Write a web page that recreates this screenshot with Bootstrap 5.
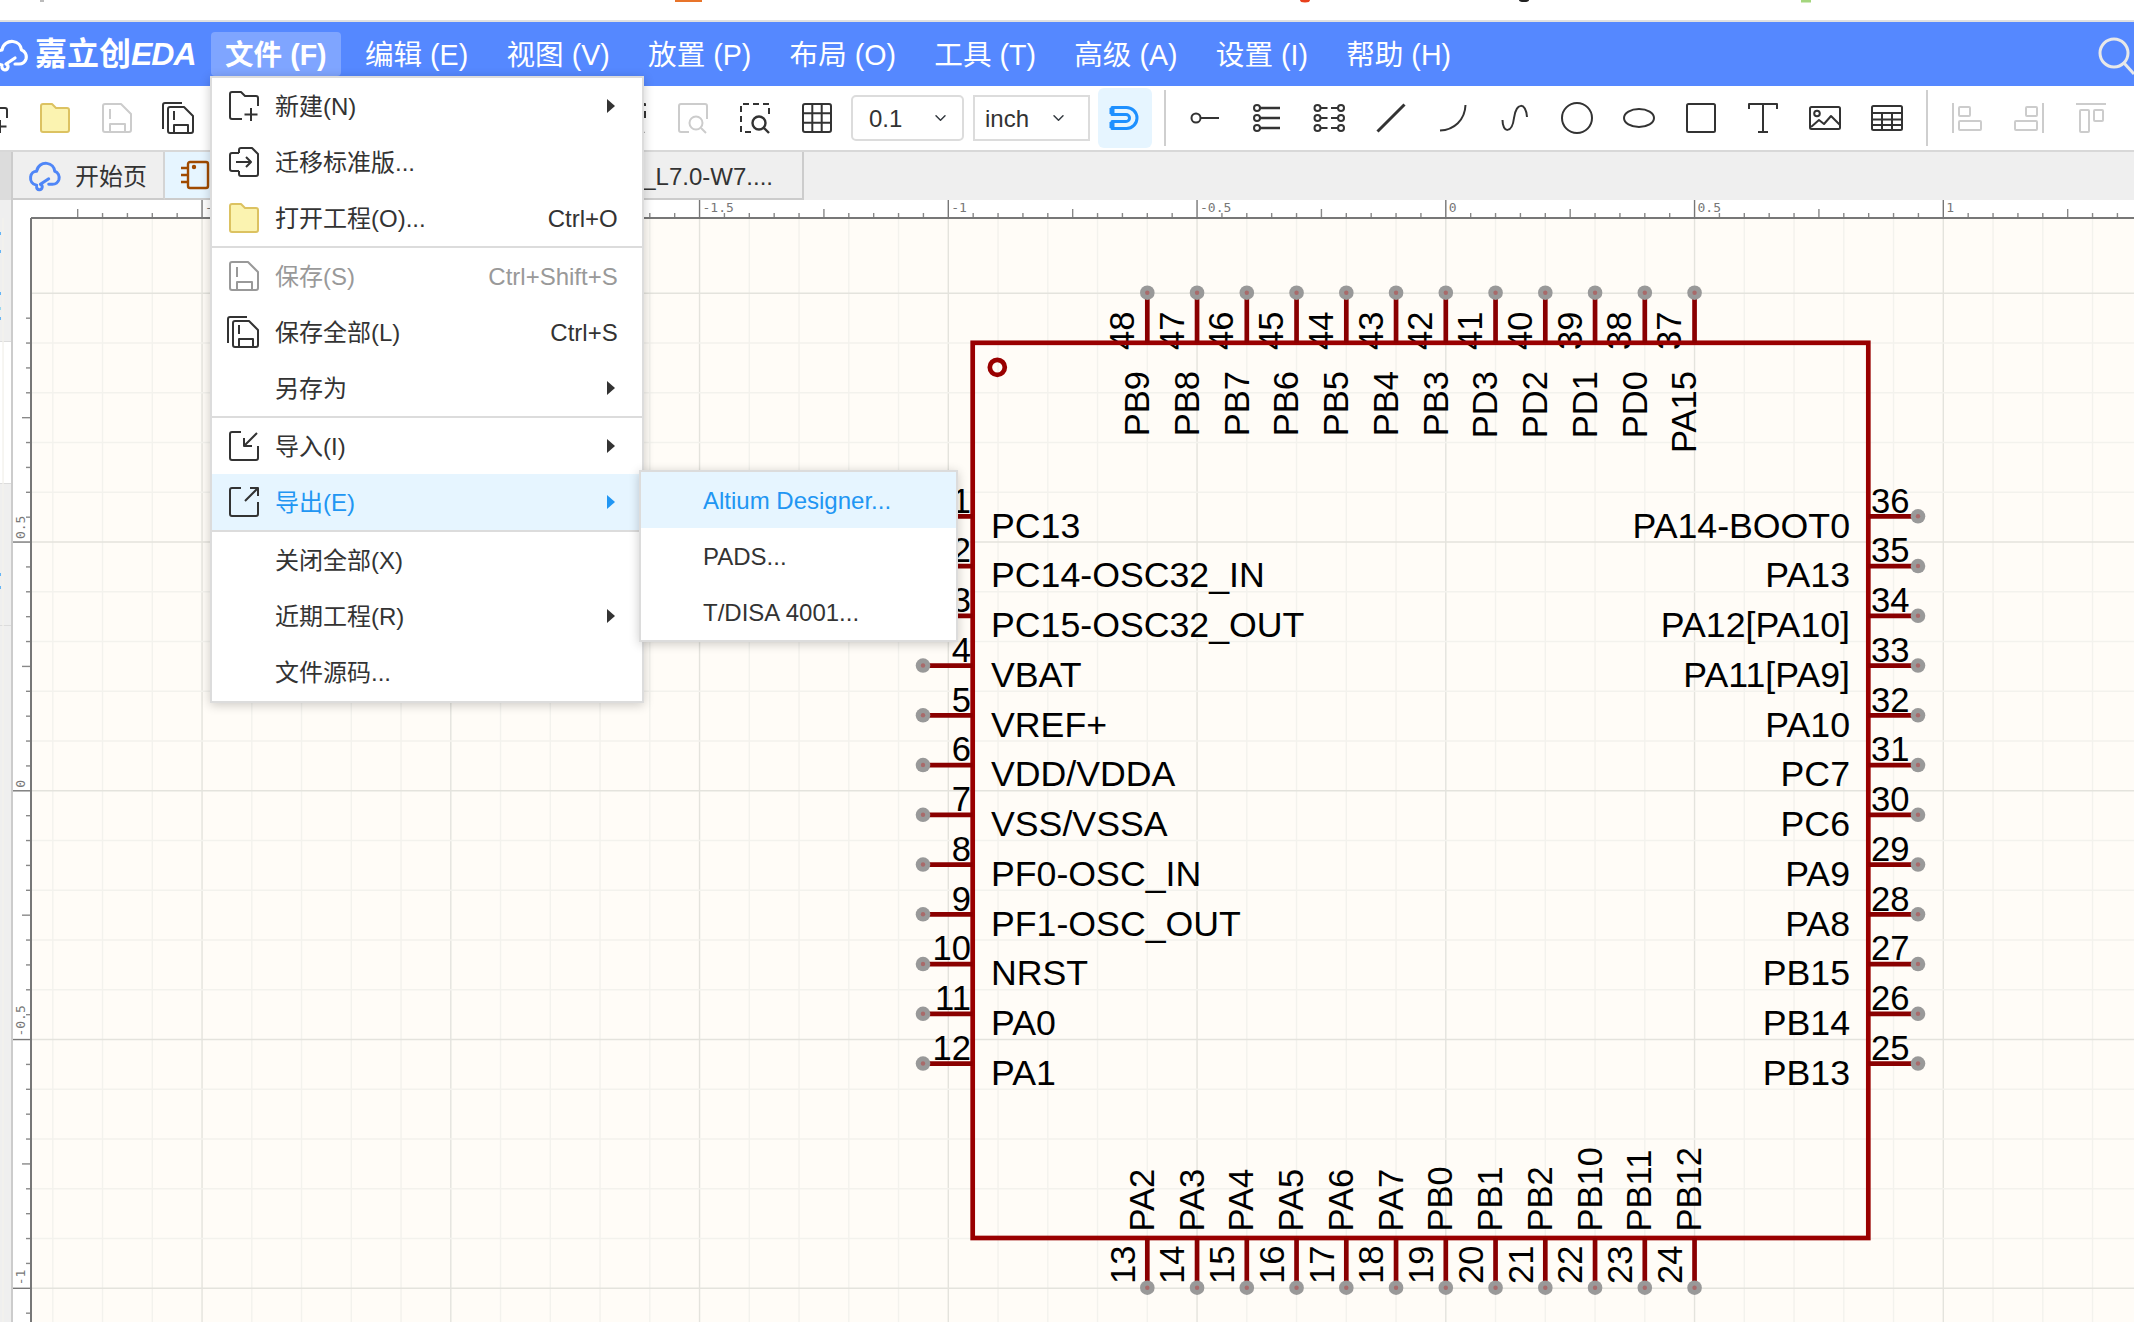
<!DOCTYPE html>
<html lang="zh-CN">
<head>
    <meta charset="UTF-8">
    <title>嘉立创EDA</title>
    <link href="https://cdn.jsdelivr.net/npm/bootstrap@5.3.0/dist/css/bootstrap.min.css" rel="stylesheet">
    <style>
        html, body {
            height: 100%;
        }
        body {
            font-family: "Liberation Sans", "Noto Sans CJK SC", sans-serif;
            font-size: 24px;
            color: #333;
            background: #fff;
            overflow: hidden;
        }
        .sprite { position: absolute; width: 0; height: 0; }
        svg { overflow: visible; flex-shrink: 0; }
        .ic-line { fill: none; stroke: currentColor; stroke-width: 2; stroke-linejoin: round; }

        .top-strip { height: 22px; border-bottom: 2px solid #e0e0e0; }
        .top-strip svg { display: block; }

        .app-bar { height: 64px; background: #5588ff; z-index: 20; --bs-navbar-nav-link-padding-x: 14px; }
        .app-logo { width: 211px; color: #fff; font-size: 32px; font-weight: 700; white-space: nowrap; }
        .app-logo svg { margin-left: -6px; margin-right: 7px; }
        .app-logo em { letter-spacing: -1px; }
        .bar-menu { gap: 10.3px; }
        .bar-menu .nav-link {
            height: 44px;
            display: flex;
            align-items: center;
            padding-top: 2px;
            padding-bottom: 0;
            font-size: 28.6px;
            color: #fff;
            white-space: nowrap;
            border-radius: 4px;
        }
        .bar-menu .nav-link.is-open { background: #7fa5ff; font-weight: 700; color: #fff; }
        .bar-search { margin-right: -4px; margin-top: 2px; color: #e8e8e8; }

        .file-menu.dropdown-menu {
            position: absolute;
            top: 44px;
            left: -1px;
            width: 434px;
            padding: 0 0 1px;
            margin: 0;
            border: 2px solid #dcdcdc;
            border-radius: 0;
            box-shadow: 0 2px 10px rgba(0, 0, 0, .2);
            font-size: 24px;
            color: #333;
        }
        .file-menu .dropdown-divider { margin: 0; border-top: 2px solid #dcdcdc; opacity: 1; }
        .file-menu .dropdown-item {
            height: 56px;
            display: flex;
            align-items: center;
            padding: 2px 24.3px 0 17px;
            color: #333;
            font-size: 24px;
            background: transparent;
        }
        .file-menu .dropdown-item.is-off { color: #999; }
        .file-menu .dropdown-item.is-open { background: #e6f5ff; color: #2196f3; }
        .menu-ic { width: 30px; height: 30px; margin-right: 16px; margin-top: -2px; color: #333; flex-shrink: 0; }
        .is-off .menu-ic { color: #999; }
        .sub-caret {
            width: 0;
            height: 0;
            margin-left: auto;
            margin-right: 3px;
            margin-top: -2px;
            border-left: 8px solid #333;
            border-top: 7.5px solid transparent;
            border-bottom: 7.5px solid transparent;
        }
        .is-open .sub-caret { border-left-color: #2196f3; }
        .menu-key { margin-left: auto; }
        .export-menu.dropdown-menu {
            top: -4px;
            left: 427px;
            width: 319px;
            padding: 0;
        }
        .export-menu .dropdown-item { padding-left: 62px; }

        .tool-row { height: 66px; border-bottom: 2px solid #d8d8d8; background: #fff; }
        .tool-lead { margin-left: -38px; }
        .tool-slot { width: 62px; height: 64px; display: flex; align-items: center; justify-content: center; color: #333; flex-shrink: 0; }
        .tool-slot.is-off { color: #ccc; }
        .tool-hidden { width: 390px; flex-shrink: 0; }
        .tool-ic { width: 30px; height: 30px; }
        .grid-select.form-select {
            height: 46px;
            border: 2px solid #dcdcdc;
            color: #333;
            font-size: 24px;
            line-height: 1;
            box-shadow: none;
            background-size: 15px 12px;
        }
        .grid-size { width: 113px; margin-left: 3px; padding: 2px 0 0 16px; border-radius: 5px; background-position: right 14px center; }
        .grid-unit { width: 117px; margin-left: 9px; padding: 2px 0 0 10px; border-radius: 0; background-position: right 22px center; }
        .snap-btn {
            width: 54px;
            height: 60px;
            margin-left: 8px;
            padding: 0;
            border: 0;
            border-radius: 6px;
            background: #e6f5ff;
            color: #1e90ff;
        }
        .tool-rule { width: 2px; height: 56px; background: #cfcfcf; margin: 0 8px 0 12px; flex-shrink: 0; }
        .tool-rule.is-last { margin-left: 8px; }

        .tab-row { height: 48px; background: #efefef; }
        .tab-corner { width: 13px; background: #dcdcdc; border-right: 2px solid #ccc; }
        .doc-tab {
            height: 48px;
            display: flex;
            align-items: center;
            border-bottom: 2px solid #ccc;
            white-space: nowrap;
        }
        .doc-tab span, .doc-part { padding-top: 3px; }
        .doc-home { width: 152px; padding-left: 16px; gap: 14px; background: #efefef; border-right: 2px solid #d4d4d4; }
        .home-cloud { color: #4f86f7; }
        .doc-chip { width: 235px; padding-left: 16px; background: #e6f5ff; }
        .doc-part { width: 404px; justify-content: flex-end; padding-right: 29px; background: #efefef; border-right: 2px solid #ccc; }

        .work-row { height: 1122px; }
        .side-strip { width: 13px; background: #efefef; border-right: 2px solid #ccc; flex-shrink: 0; }
        .side-block { height: 142px; border-bottom: 1px solid #dcdcdc; }
        .side-block svg { display: block; }
        .side-blank { background: #fff; }
        .side-rest { flex: 1 1 auto; }

        #board { display: block; flex: 1 1 auto; }
        #board text { font-family: "Liberation Sans", sans-serif; font-size: 34.6px; fill: #000; }
        #board text.side-name { font-size: 35.7px; }
        #board text.rule-label { font-family: "DejaVu Sans Mono", monospace; font-size: 13px; fill: #777; }
    </style>
</head>
<body>
    <svg class="sprite" aria-hidden="true">
        <defs>
            <g id="i-new" class="ic-line">
                <path d="M13 28H3a2 2 0 0 1-2-2V3a2 2 0 0 1 2-2h9l4 4h11a2 2 0 0 1 2 2v8"/>
                <path d="M22 17v13M15.500 23.500h13"/>
            </g>
            <g id="i-move" class="ic-line">
                <path d="M10 6V3a2 2 0 0 1 2-2h11l6 6v20a2 2 0 0 1-2 2H12a2 2 0 0 1-2-2v-3"/>
                <path d="M10 6H3a2 2 0 0 0-2 2v14a2 2 0 0 0 2 2h7"/>
                <path d="M7 15h15M17 10l5 5-5 5"/>
            </g>
            <g id="i-folder">
                <path d="M1 3a2 2 0 0 1 2-2h9l4 4h11a2 2 0 0 1 2 2v20a2 2 0 0 1-2 2H3a2 2 0 0 1-2-2Z" fill="#fbf3b0" stroke="#dcc261" stroke-width="2" stroke-linejoin="round"/>
            </g>
            <g id="i-save" class="ic-line">
                <path d="M3 1h16l10 10v16a2 2 0 0 1-2 2H3a2 2 0 0 1-2-2V3a2 2 0 0 1 2-2Z"/>
                <path d="M8 6v10M8 29v-8h15v8"/>
            </g>
            <g id="i-save-all" class="ic-line">
                <path d="M-1 26V2a2 2 0 0 1 2-2h17"/>
                <path d="M6 4h14l9 9v15a2 2 0 0 1-2 2H6a2 2 0 0 1-2-2V6a2 2 0 0 1 2-2Z"/>
                <path d="M10 8v9M10 30v-8h14v8"/>
            </g>
            <g id="i-import" class="ic-line">
                <path d="M12 1H3a2 2 0 0 0-2 2v24a2 2 0 0 0 2 2h24a2 2 0 0 0 2-2V15"/>
                <path d="M28 2 15 15M15 7v8h8"/>
            </g>
            <g id="i-export" class="ic-line">
                <path d="M12 1H3a2 2 0 0 0-2 2v24a2 2 0 0 0 2 2h24a2 2 0 0 0 2-2V15"/>
                <path d="M16 14 29 1M21 1h8v8"/>
            </g>
            <g id="i-cloud" fill="none" stroke="currentColor" stroke-linecap="round" stroke-linejoin="round">
                <path d="M8 25C3 24 1 20 1.500 16 2 12 5 10 8 10 9 4 14 1 19 1.500 24 2 27 6 27.500 10 31 11 33 15 32 19 31 22 28 24 25 24H21"/>
                <path d="M8 27a3 3 0 1 0 4-3L21 18"/>
            </g>
        </defs>
    </svg>

    <div class="top-strip">
        <svg width="2134" height="20">
            <rect x="40" y="0" width="4" height="2" fill="#bbb"/>
            <rect x="675" y="0" width="27" height="2" fill="#e8742a"/>
            <ellipse cx="1305" cy="0" rx="5" ry="2.500" fill="#e8401c"/>
            <ellipse cx="1524" cy="0" rx="5" ry="2" fill="#222"/>
            <rect x="1801" y="0" width="10" height="2.500" fill="#a4d67e"/>
        </svg>
    </div>

    <nav class="navbar navbar-expand p-0 app-bar flex-nowrap justify-content-start">
        <div class="app-logo d-flex align-items-center">
            <svg width="34" height="34" viewBox="0 0 34 28"><use href="#i-cloud" stroke-width="3.200"/></svg>
            <span>嘉立创<em>EDA</em></span>
        </div>
        <ul class="navbar-nav bar-menu flex-row">
            <li class="nav-item dropdown">
                <a class="nav-link is-open" href="#">文件 (F)</a>
                <ul class="dropdown-menu show file-menu">
                    <li><a class="dropdown-item" href="#"><svg class="menu-ic" viewBox="0 0 30 30"><use href="#i-new"/></svg>新建(N)<span class="sub-caret"></span></a></li>
                    <li><a class="dropdown-item" href="#"><svg class="menu-ic" viewBox="0 0 30 30"><use href="#i-move"/></svg>迁移标准版...</a></li>
                    <li><a class="dropdown-item" href="#"><svg class="menu-ic" viewBox="0 0 30 30"><use href="#i-folder"/></svg>打开工程(O)...<span class="menu-key">Ctrl+O</span></a></li>
                    <li><hr class="dropdown-divider"></li>
                    <li><a class="dropdown-item is-off" href="#"><svg class="menu-ic" viewBox="0 0 30 30"><use href="#i-save"/></svg>保存(S)<span class="menu-key">Ctrl+Shift+S</span></a></li>
                    <li><a class="dropdown-item" href="#"><svg class="menu-ic" viewBox="0 0 30 30"><use href="#i-save-all"/></svg>保存全部(L)<span class="menu-key">Ctrl+S</span></a></li>
                    <li><a class="dropdown-item" href="#"><span class="menu-ic"></span>另存为<span class="sub-caret"></span></a></li>
                    <li><hr class="dropdown-divider"></li>
                    <li><a class="dropdown-item" href="#"><svg class="menu-ic" viewBox="0 0 30 30"><use href="#i-import"/></svg>导入(I)<span class="sub-caret"></span></a></li>
                    <li class="position-relative">
                        <a class="dropdown-item is-open" href="#"><svg class="menu-ic" viewBox="0 0 30 30"><use href="#i-export"/></svg>导出(E)<span class="sub-caret"></span></a>
                        <ul class="dropdown-menu show file-menu export-menu">
                            <li><a class="dropdown-item is-open" href="#">Altium Designer...</a></li>
                            <li><a class="dropdown-item" href="#">PADS...</a></li>
                            <li><a class="dropdown-item" href="#">T/DISA 4001...</a></li>
                        </ul>
                    </li>
                    <li><hr class="dropdown-divider"></li>
                    <li><a class="dropdown-item" href="#"><span class="menu-ic"></span>关闭全部(X)</a></li>
                    <li><a class="dropdown-item" href="#"><span class="menu-ic"></span>近期工程(R)<span class="sub-caret"></span></a></li>
                    <li><a class="dropdown-item" href="#"><span class="menu-ic"></span>文件源码...</a></li>
                </ul>
            </li>
            <li class="nav-item"><a class="nav-link" href="#">编辑 (E)</a></li>
            <li class="nav-item"><a class="nav-link" href="#">视图 (V)</a></li>
            <li class="nav-item"><a class="nav-link" href="#">放置 (P)</a></li>
            <li class="nav-item"><a class="nav-link" href="#">布局 (O)</a></li>
            <li class="nav-item"><a class="nav-link" href="#">工具 (T)</a></li>
            <li class="nav-item"><a class="nav-link" href="#">高级 (A)</a></li>
            <li class="nav-item"><a class="nav-link" href="#">设置 (I)</a></li>
            <li class="nav-item"><a class="nav-link" href="#">帮助 (H)</a></li>
        </ul>
        <svg class="bar-search ms-auto" width="40" height="40" viewBox="0 0 40 40">
            <circle cx="16" cy="18" r="14" fill="none" stroke="currentColor" stroke-width="3"/>
            <path d="M26 28 36 39" stroke="currentColor" stroke-width="3"/>
        </svg>
    </nav>

    <div class="tool-row d-flex align-items-center">
        <div class="tool-slot tool-lead"><svg class="tool-ic" viewBox="0 0 30 30"><use href="#i-new"/></svg></div>
        <div class="tool-slot"><svg class="tool-ic" viewBox="0 0 30 30"><use href="#i-folder"/></svg></div>
        <div class="tool-slot is-off"><svg class="tool-ic" viewBox="0 0 30 30"><use href="#i-save"/></svg></div>
        <div class="tool-slot"><svg class="tool-ic" viewBox="0 0 30 30"><use href="#i-save-all"/></svg></div>
        <div class="tool-hidden"></div>
        <div class="tool-slot">
            <svg class="tool-ic" viewBox="0 0 30 30"><g class="ic-line"><path d="M10 29H1V1h28v16" stroke-dasharray="7 5"/><circle cx="18" cy="20" r="6.500"/><path d="m23 25 5 5"/></g></svg>
        </div>
        <div class="tool-slot is-off">
            <svg class="tool-ic" viewBox="0 0 30 30"><g class="ic-line"><path d="M11 29H3a2 2 0 0 1-2-2V3a2 2 0 0 1 2-2h24a2 2 0 0 1 2 2v13"/><circle cx="18" cy="20" r="6.500"/><path d="m23 25 5 5"/></g></svg>
        </div>
        <div class="tool-slot">
            <svg class="tool-ic" viewBox="0 0 30 30"><g class="ic-line"><path d="M11 29H1V1h28v14" stroke-dasharray="6 4"/><circle cx="19" cy="20" r="6.500" stroke-width="2.400"/><path d="m24 25 5 5" stroke-width="2.400"/></g></svg>
        </div>
        <div class="tool-slot">
            <svg class="tool-ic" viewBox="0 0 30 30"><g class="ic-line"><rect x="1" y="1" width="28" height="28" rx="2"/><path d="M10.300 1v28M19.700 1v28M1 10.300h28M1 19.700h28"/></g></svg>
        </div>
        <select class="form-select grid-select grid-size"><option>0.1</option></select>
        <select class="form-select grid-select grid-unit"><option>inch</option></select>
        <button class="snap-btn d-flex align-items-center justify-content-center" type="button">
            <svg width="28" height="24" viewBox="0 0 28 24"><path d="M1 1.500H15.500A10.500 10.500 0 0 1 15.500 22.500H1V15.500H15A3.500 3.500 0 0 0 15 8.500H1Z" fill="none" stroke="currentColor" stroke-width="3" stroke-linejoin="round"/><path d="M1 2v6M1 16v6" stroke="currentColor" stroke-width="5"/></svg>
        </button>
        <div class="tool-rule"></div>
        <div class="tool-slot"><svg class="tool-ic" viewBox="0 0 30 30"><g class="ic-line"><circle cx="6" cy="15" r="4.500"/><path d="M10.500 15H29"/></g></svg></div>
        <div class="tool-slot"><svg class="tool-ic" viewBox="0 0 30 30"><g class="ic-line"><circle cx="5" cy="5" r="3"/><circle cx="5" cy="15" r="3"/><circle cx="5" cy="25" r="3"/></g><path d="M8 5h20M8 15h20M8 25h20" stroke="currentColor" stroke-width="2.400" fill="none"/></svg></div>
        <div class="tool-slot"><svg class="tool-ic" viewBox="0 0 30 30"><g class="ic-line"><circle cx="3.500" cy="5" r="3"/><circle cx="3.500" cy="15" r="3"/><circle cx="3.500" cy="25" r="3"/><circle cx="27" cy="5" r="3"/><circle cx="27" cy="15" r="3"/><circle cx="27" cy="25" r="3"/><path d="M6.500 5h7M6.500 15h7M6.500 25h7M17 5h7M17 15h7M17 25h7"/></g></svg></div>
        <div class="tool-slot"><svg class="tool-ic" viewBox="0 0 30 30"><path d="M1.500 28.500 28.500 1.500" stroke="currentColor" stroke-width="3" fill="none"/></svg></div>
        <div class="tool-slot"><svg class="tool-ic" viewBox="0 0 30 30"><path d="M2 27.500C16 27 27 17 27.500 2" class="ic-line"/></svg></div>
        <div class="tool-slot"><svg class="tool-ic" viewBox="0 0 30 30"><path d="M2.500 17C2.500 30 12 31 14 15 16 -1 26 -1 27 14" class="ic-line"/></svg></div>
        <div class="tool-slot"><svg class="tool-ic" viewBox="0 0 30 30"><circle cx="15" cy="15" r="15" class="ic-line"/></svg></div>
        <div class="tool-slot"><svg class="tool-ic" viewBox="0 0 30 30"><ellipse cx="15" cy="15" rx="15" ry="9" class="ic-line"/></svg></div>
        <div class="tool-slot"><svg class="tool-ic" viewBox="0 0 30 30"><rect x="1" y="1" width="28" height="28" rx="1.500" class="ic-line"/></svg></div>
        <div class="tool-slot"><svg class="tool-ic" viewBox="0 0 30 30"><path d="M1 6V1h28v5M15 1v28M10 29h10" class="ic-line"/></svg></div>
        <div class="tool-slot"><svg class="tool-ic" viewBox="0 0 30 30"><g class="ic-line"><rect x="0" y="4" width="30" height="22" rx="1.500"/><circle cx="7" cy="10.500" r="2.800"/><path d="m1 24 8-7 5 4 7-8 9 9"/></g></svg></div>
        <div class="tool-slot"><svg class="tool-ic" viewBox="0 0 30 30"><g class="ic-line"><rect x="0" y="3" width="30" height="24" rx="1.500"/><path d="M0 10h30M0 16.500h30M0 22h30M10 10v17M20 10v17"/></g></svg></div>
        <div class="tool-rule is-last"></div>
        <div class="tool-slot is-off"><svg class="tool-ic" viewBox="0 0 30 30"><g class="ic-line"><path d="M1 0v30"/><rect x="7" y="4" width="11" height="9" rx="1"/><rect x="7" y="18" width="22" height="9" rx="1"/></g></svg></div>
        <div class="tool-slot is-off"><svg class="tool-ic" viewBox="0 0 30 30"><g class="ic-line"><path d="M29 0v30"/><rect x="12" y="4" width="11" height="9" rx="1"/><rect x="1" y="18" width="22" height="9" rx="1"/></g></svg></div>
        <div class="tool-slot is-off"><svg class="tool-ic" viewBox="0 0 30 30"><g class="ic-line"><path d="M0 1h30"/><rect x="4" y="7" width="9" height="22" rx="1"/><rect x="18" y="7" width="9" height="11" rx="1"/></g></svg></div>
    </div>

    <div class="tab-row d-flex">
        <div class="tab-corner"></div>
        <div class="doc-tab doc-home">
            <svg width="32" height="26" viewBox="0 0 34 28" class="home-cloud"><use href="#i-cloud" stroke-width="3.200"/></svg>
            <span>开始页</span>
        </div>
        <div class="doc-tab doc-chip">
            <svg width="28" height="28" viewBox="0 0 28 28" fill="none" stroke="#a04a00" stroke-width="2.400">
                <rect x="7" y="1" width="20" height="26" rx="2"/>
                <path d="M0 7h7M0 14h7M0 21h7"/>
                <circle cx="13" cy="6" r="1" fill="#a04a00"/>
            </svg>
        </div>
        <div class="doc-tab doc-part">_L7.0-W7....</div>
    </div>

    <div class="work-row d-flex">
        <div class="side-strip d-flex flex-column">
            <div class="side-block">
                <svg width="11" height="142">
                    <rect y="32" width="1" height="3" fill="#64b5f6"/>
                    <rect y="50" width="1" height="3" fill="#64b5f6"/>
                    <rect y="92" width="1" height="3" fill="#64b5f6"/>
                    <rect y="107" width="1" height="3" fill="#9ad8f0"/>
                    <rect y="117" width="1" height="3" fill="#64b5f6"/>
                </svg>
            </div>
            <div class="side-block side-blank"></div>
            <div class="side-block">
                <svg width="11" height="142">
                    <rect y="89" width="1" height="3" fill="#64b5f6"/>
                    <rect y="102" width="1" height="3" fill="#64b5f6"/>
                </svg>
            </div>
            <div class="side-rest"></div>
        </div>
        <svg id="board" width="2121" height="1122" viewBox="13 200 2121 1122"></svg>
    </div>

    <script>
        // drawing uses page coordinates, the viewBox of #board starts at the ruler corner
        const STEP = 49.75;
        const ZERO_X = 1445.8;
        const ZERO_Y = 790.8;
        const RIGHT = 2134, BOTTOM = 1322;
        const LEFT_EDGE = 31, TOP_EDGE = 218;
        const BOX = { left: 972.7, right: 1868.3, top: 342.8, bottom: 1238 };
        const PIN_X0 = 1147.3, PIN_Y0 = 516.3;
        const RED = '#990000', PIN_RED = '#8a0000';

        const topNames = ['PB9','PB8','PB7','PB6','PB5','PB4','PB3','PD3','PD2','PD1','PD0','PA15'];
        const bottomNames = ['PA2','PA3','PA4','PA5','PA6','PA7','PB0','PB1','PB2','PB10','PB11','PB12'];
        const leftNames = ['PC13','PC14-OSC32_IN','PC15-OSC32_OUT','VBAT','VREF+','VDD/VDDA','VSS/VSSA','PF0-OSC_IN','PF1-OSC_OUT','NRST','PA0','PA1'];
        const rightNames = ['PA14-BOOT0','PA13','PA12[PA10]','PA11[PA9]','PA10','PC7','PC6','PA9','PA8','PB15','PB14','PB13'];

        let out = '';
        const line = (x1, y1, x2, y2, color, w) =>
            `<line x1="${x1}" y1="${y1}" x2="${x2}" y2="${y2}" stroke="${color}" stroke-width="${w}"/>`;
        const text = (x, y, s, anchor = 'start', cls = '') =>
            `<text x="${x}" y="${y}" text-anchor="${anchor}" class="${cls}">${s}</text>`;
        const upText = (x, y, s, anchor = 'start', cls = '') =>
            `<text x="${x}" y="${y}" text-anchor="${anchor}" class="${cls}" transform="rotate(-90 ${x} ${y})">${s}</text>`;

        // rulers and sheet
        out += `<rect x="13" y="200" width="2121" height="1122" fill="#fff"/>`;
        out += `<rect x="${LEFT_EDGE}" y="${TOP_EDGE}" width="${RIGHT - LEFT_EDGE}" height="${BOTTOM - TOP_EDGE}" fill="#fffcf7"/>`;

        // grid, every fifth line is stronger
        for (let k = -29; k <= 14; k++) {
            const x = ZERO_X + k * STEP;
            const strong = ((k % 5) + 5) % 5 === 0;
            out += line(x, TOP_EDGE, x, BOTTOM, strong ? '#e4e3dd' : '#f3f2ed', 1.4);
        }
        for (let k = -10; k <= 11; k++) {
            const y = ZERO_Y + k * STEP;
            if (y < TOP_EDGE) continue;
            const strong = ((k % 5) + 5) % 5 === 0;
            out += line(LEFT_EDGE, y, RIGHT, y, strong ? '#e4e3dd' : '#f3f2ed', 1.4);
        }

        // ruler ticks, 0.05 inch apart
        const tickLen = i => (i % 10 === 0 ? 18 : i % 5 === 0 ? 9 : 5);
        for (let i = -55; i <= 28; i++) {
            const x = ZERO_X + i * STEP / 2;
            if (x < LEFT_EDGE) continue;
            out += line(x, TOP_EDGE - tickLen(i), x, TOP_EDGE, i % 10 === 0 ? '#777' : '#888', 1.4);
            if (i % 10 === 0) out += text(x + 3, 212, String(i / 20), 'start', 'rule-label');
        }
        for (let i = -19; i <= 21; i++) {
            const y = ZERO_Y + i * STEP / 2;
            if (y < TOP_EDGE) continue;
            out += line(LEFT_EDGE - tickLen(i), y, LEFT_EDGE, y, i % 10 === 0 ? '#777' : '#888', 1.4);
            if (i % 10 === 0) out += upText(25, y - 3, String(-i / 20), 'start', 'rule-label');
        }
        out += line(LEFT_EDGE, TOP_EDGE, RIGHT, TOP_EDGE, '#777', 2);
        out += line(LEFT_EDGE, TOP_EDGE, LEFT_EDGE, BOTTOM, '#777', 2);

        const pinEnd = (x, y) =>
            `<circle cx="${x}" cy="${y}" r="7.300" fill="#999"/><circle cx="${x}" cy="${y}" r="2.200" fill="#a86a6a"/>`;

        // pin numbers go under the body outline
        for (let i = 0; i < 12; i++) {
            const tx = PIN_X0 + i * STEP;
            const y = PIN_Y0 + i * STEP;
            out += upText(tx - 13.5, 350, 48 - i);
            out += upText(tx + 1.8, 371, topNames[i], 'end');
            out += upText(tx - 12.7, 1284, 13 + i);
            out += upText(tx + 6.5, 1231.5, bottomNames[i]);
            out += text(971, y - 3.6, 1 + i, 'end');
            out += text(991, y + 21.4, leftNames[i], 'start', 'side-name');
            out += text(1871, y - 3.6, 36 - i);
            out += text(1850, y + 21.4, rightNames[i], 'end', 'side-name');
        }

        out += `<rect x="${BOX.left}" y="${BOX.top}" width="${BOX.right - BOX.left}" height="${BOX.bottom - BOX.top}" fill="none" stroke="${RED}" stroke-width="4.700"/>`;
        out += `<circle cx="997.300" cy="367.300" r="7.500" fill="none" stroke="${RED}" stroke-width="4.700"/>`;

        for (let i = 0; i < 12; i++) {
            const tx = PIN_X0 + i * STEP;
            const y = PIN_Y0 + i * STEP;
            out += line(tx, 292.7, tx, BOX.top, PIN_RED, 4.7) + pinEnd(tx, 292.7);
            out += line(tx, BOX.bottom, tx, 1287.7, PIN_RED, 4.7) + pinEnd(tx, 1287.7);
            out += line(923, y, BOX.left, y, PIN_RED, 4.7) + pinEnd(923, y);
            out += line(BOX.right, y, 1918, y, PIN_RED, 4.7) + pinEnd(1918, y);
        }

        document.getElementById('board').innerHTML = out;
    </script>
    <script src="https://cdn.jsdelivr.net/npm/bootstrap@5.3.0/dist/js/bootstrap.bundle.min.js"></script>
</body>
</html>
